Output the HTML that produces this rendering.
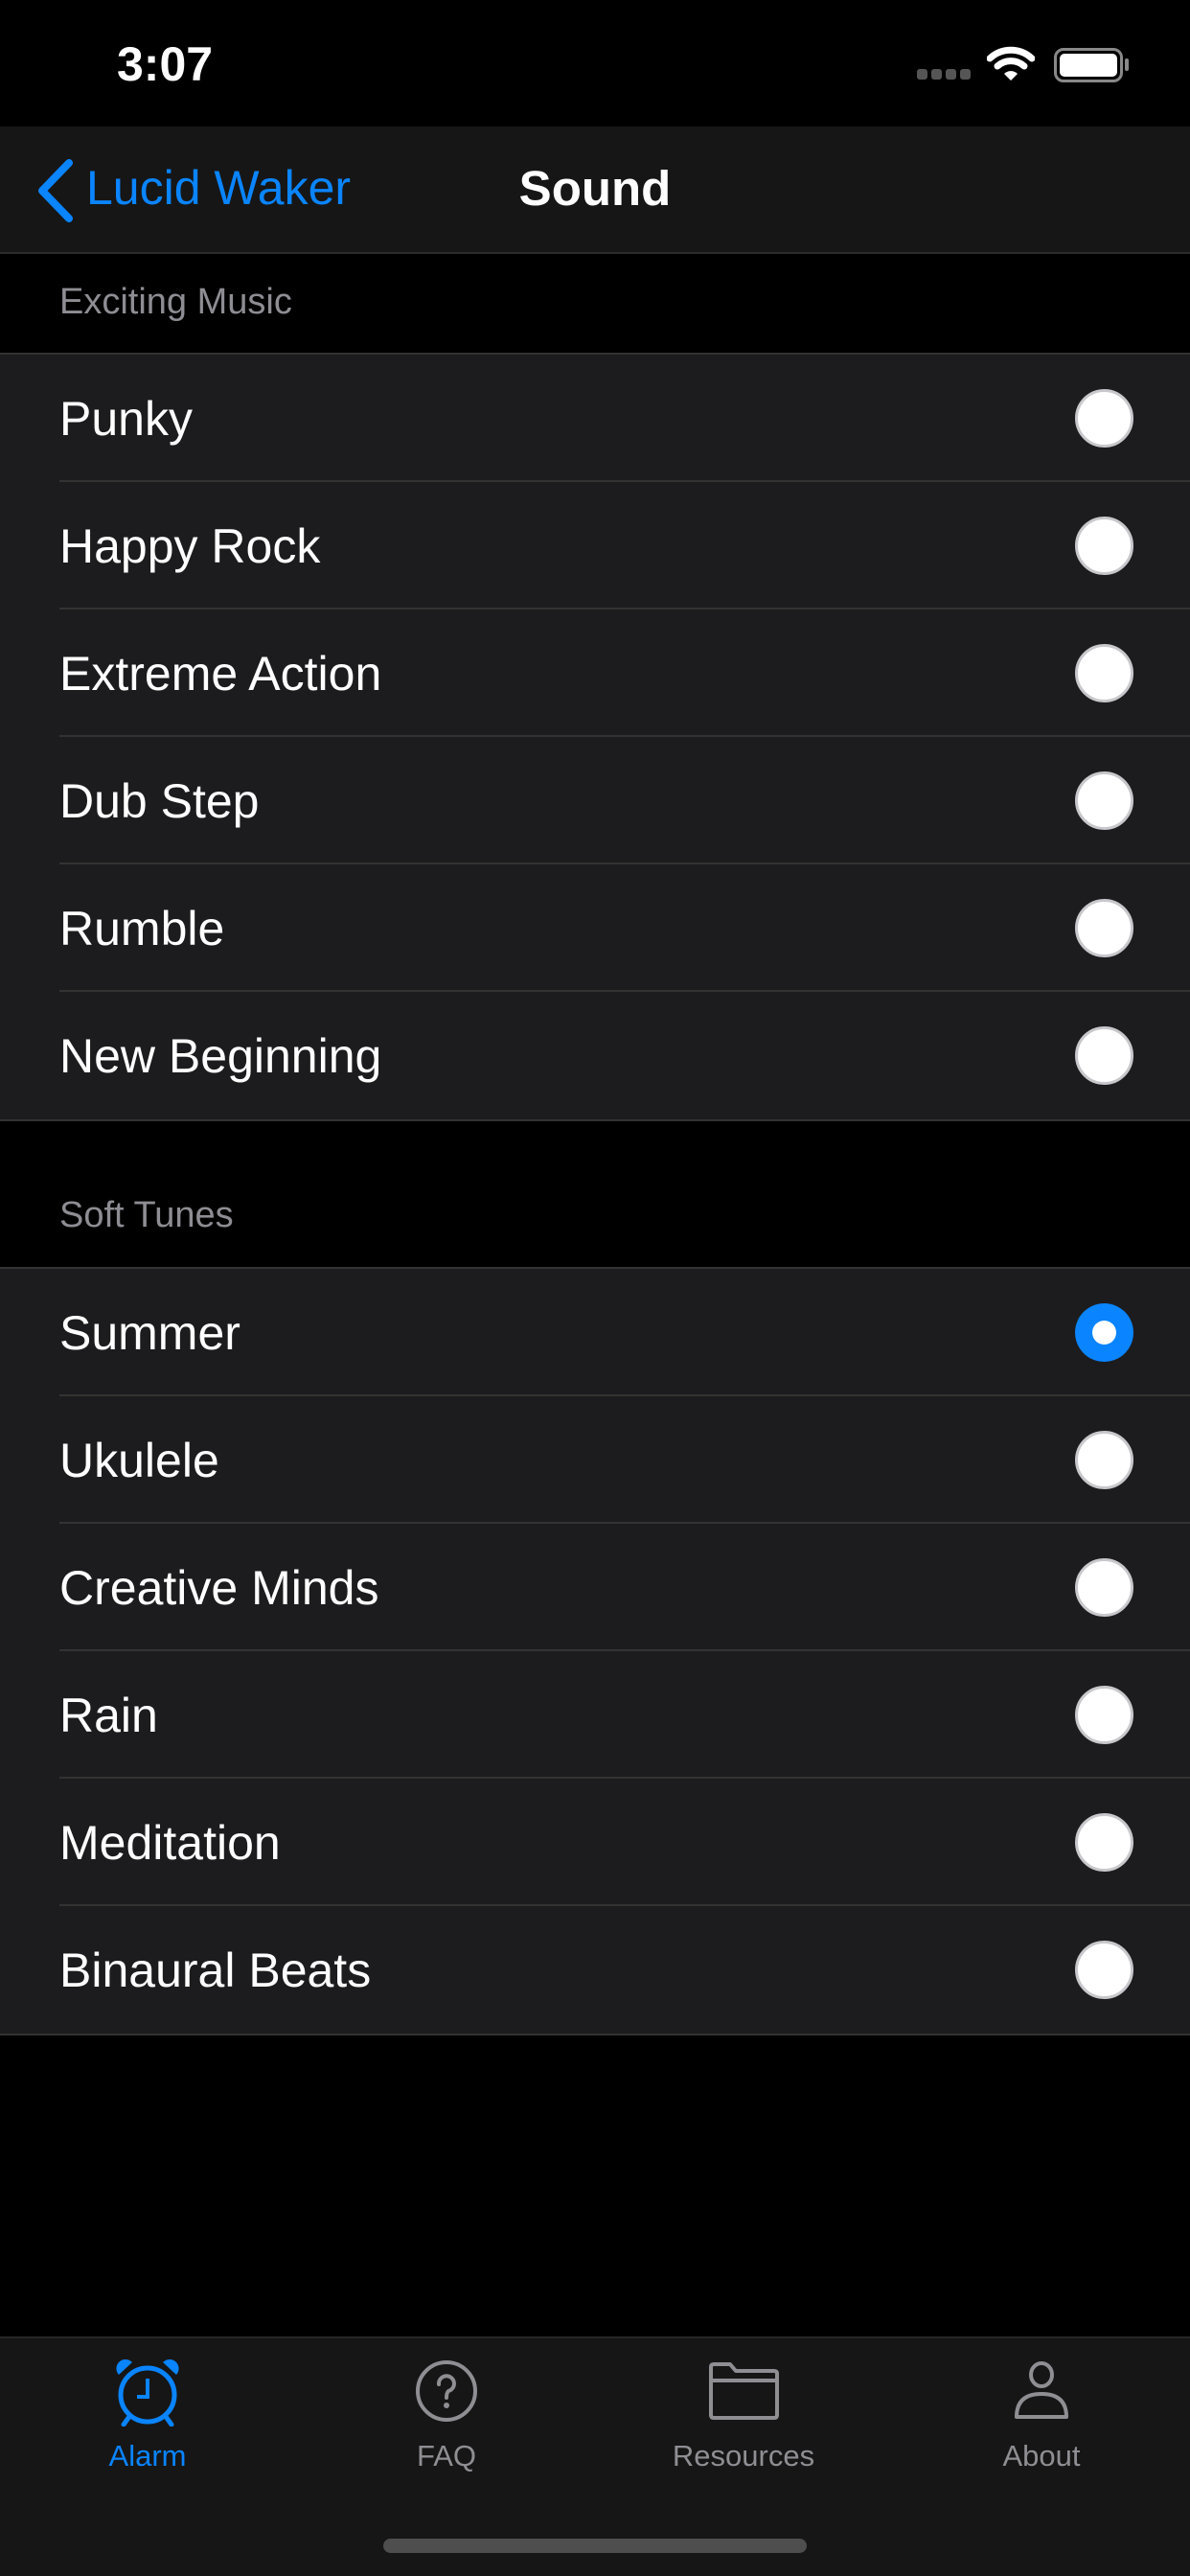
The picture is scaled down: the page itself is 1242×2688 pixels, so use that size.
<!DOCTYPE html>
<html><head><meta charset="utf-8"><style>
*{margin:0;padding:0;box-sizing:border-box}
body{width:1242px;height:2688px;background:#000;font-family:"Liberation Sans",sans-serif;color:#fff;position:relative;overflow:hidden}
.abs{position:absolute}
.nav{top:132px;left:0;width:1242px;height:133px;background:#161616;border-bottom:2px solid #2c2c2e}
.hdr{left:62px;font-size:38px;color:#8d8d93}
.list{left:0;width:1242px;background:#1c1c1e;border-top:2px solid #333;border-bottom:2px solid #333}
.row{height:133px;position:relative;display:flex;align-items:center;padding-left:62px;font-size:50px}
.row:after{content:"";position:absolute;left:62px;right:0;bottom:0;height:2px;background:#333}
.row:last-child:after{display:none}
.r{position:absolute;left:1122px;top:36px;width:61px;height:61px;border-radius:50%;background:#fff;border:3px solid #c8c8cc}
.r.on{background:#0a84ff;border:none}
.r.on:after{content:"";position:absolute;left:18px;top:18px;width:25px;height:25px;border-radius:50%;background:#fff}
.tab{top:2438px;left:0;width:1242px;height:250px;background:#161616;border-top:2px solid #262626}
.tl{position:absolute;width:300px;text-align:center;font-size:31px;color:#8e8e93;top:105px}
</style></head><body>
<div class="abs" style="left:122px;top:38px;font-size:50px;font-weight:bold">3:07</div>
<div class="abs" style="left:957px;top:72px;width:56px;height:11px;display:flex;gap:4px"><i style="flex:1;background:#555;border-radius:3px"></i><i style="flex:1;background:#555;border-radius:3px"></i><i style="flex:1;background:#555;border-radius:3px"></i><i style="flex:1;background:#555;border-radius:3px"></i></div>
<svg class="abs" style="left:1030px;top:48px" width="50" height="38" viewBox="0 0 50 38"><path d="M3 13 A32 32 0 0 1 47 13" stroke="#fff" stroke-width="7" fill="none" stroke-linecap="round"/><path d="M11 21 A21 21 0 0 1 39 21" stroke="#fff" stroke-width="7" fill="none" stroke-linecap="round"/><path d="M18 29 L25 36 L32 29 A10 10 0 0 0 18 29Z" fill="#fff"/></svg>
<div class="abs" style="left:1100px;top:50px;width:72px;height:36px;border:3px solid #888;border-radius:10px;padding:3px"><div style="width:100%;height:100%;background:#fff;border-radius:5px"></div></div>
<div class="abs" style="left:1174px;top:61px;width:4px;height:13px;background:#888;border-radius:2px"></div>
<div class="abs nav"></div>
<svg class="abs" style="left:36px;top:165px" width="42" height="68" viewBox="0 0 42 68"><path d="M36 5 L8 34 L36 63" stroke="#0a84ff" stroke-width="8" fill="none" stroke-linecap="round" stroke-linejoin="round"/></svg>
<div class="abs" style="left:90px;top:167px;font-size:50px;color:#0a84ff">Lucid Waker</div>
<div class="abs" style="left:0;width:1242px;text-align:center;top:167px;font-size:51px;font-weight:bold">Sound</div>
<div class="abs hdr" style="top:294px">Exciting Music</div>
<div class="abs list" style="top:368px">
<div class="row">Punky<i class="r"></i></div>
<div class="row">Happy Rock<i class="r"></i></div>
<div class="row">Extreme Action<i class="r"></i></div>
<div class="row">Dub Step<i class="r"></i></div>
<div class="row">Rumble<i class="r"></i></div>
<div class="row">New Beginning<i class="r"></i></div>
</div>
<div class="abs hdr" style="top:1247px">Soft Tunes</div>
<div class="abs list" style="top:1322px">
<div class="row">Summer<i class="r on"></i></div>
<div class="row">Ukulele<i class="r"></i></div>
<div class="row">Creative Minds<i class="r"></i></div>
<div class="row">Rain<i class="r"></i></div>
<div class="row">Meditation<i class="r"></i></div>
<div class="row">Binaural Beats<i class="r"></i></div>
</div>
<div class="abs tab">
<svg class="abs" style="left:120px;top:20px" width="68" height="72" viewBox="0 0 68 72"><circle cx="34" cy="39" r="28" stroke="#0a84ff" stroke-width="5" fill="none"/><path d="M34 22 V41 H23" stroke="#0a84ff" stroke-width="4" fill="none"/><path d="M4 18 A9 9 0 0 1 18 5Z M64 18 A9 9 0 0 0 50 5Z" fill="#0a84ff"/><path d="M14 63 L9 70 M54 63 L59 70" stroke="#0a84ff" stroke-width="5" stroke-linecap="round"/></svg>
<svg class="abs" style="left:433px;top:22px" width="66" height="66" viewBox="0 0 66 66"><circle cx="33" cy="33" r="30" stroke="#8e8e93" stroke-width="4" fill="none"/><path d="M25 26 A8 8 0 1 1 35 33 Q33 35 33 40" stroke="#8e8e93" stroke-width="4" fill="none" stroke-linecap="round"/><circle cx="33" cy="48" r="3" fill="#8e8e93"/></svg>
<svg class="abs" style="left:738px;top:24px" width="76" height="62" viewBox="0 0 76 62"><path d="M4 6 Q4 3 7 3 H24 L30 10 H70 Q73 10 73 13 V56 Q73 59 70 59 H7 Q4 59 4 56Z M4 20 H73" stroke="#8e8e93" stroke-width="4" fill="none" stroke-linejoin="round"/></svg>
<svg class="abs" style="left:1058px;top:24px" width="58" height="62" viewBox="0 0 58 62"><ellipse cx="29" cy="14" rx="11" ry="12" stroke="#8e8e93" stroke-width="4" fill="none"/><path d="M3 58 Q3 34 29 34 Q55 34 55 58Z" stroke="#8e8e93" stroke-width="4" fill="none" stroke-linejoin="round"/></svg>
<div class="tl" style="left:4px;color:#0a84ff">Alarm</div>
<div class="tl" style="left:316px">FAQ</div>
<div class="tl" style="left:626px">Resources</div>
<div class="tl" style="left:937px">About</div>
</div>
<div class="abs" style="left:400px;top:2649px;width:442px;height:15px;background:#4e4e4e;border-radius:8px"></div>
</body></html>
